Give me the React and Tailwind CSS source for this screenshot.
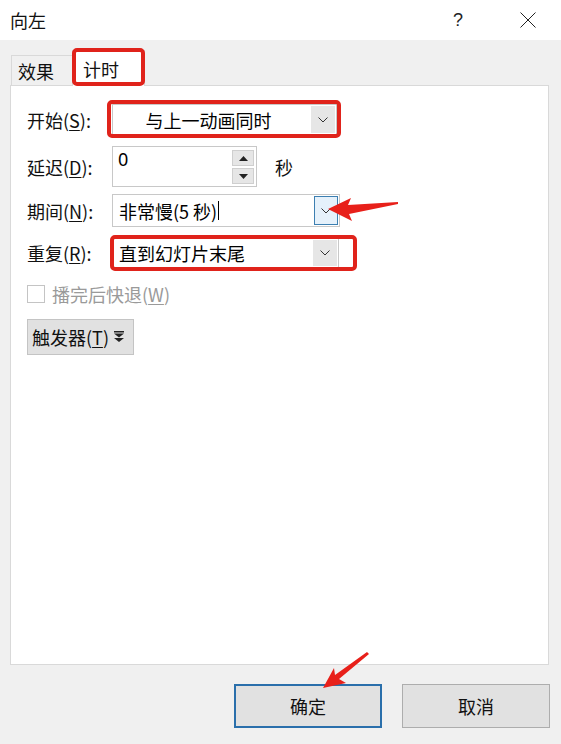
import React from 'react';

const font = "font-['Noto_Sans_CJK_SC','Noto_Sans',sans-serif]";

function Chevron({ className = '' }) {
  return (
    <svg width="10" height="6" viewBox="0 0 10 6" className={className}>
      <polyline points="0.5,0.5 5,5 9.5,0.5" fill="none" stroke="#333" strokeWidth="1" />
    </svg>
  );
}

function Combo({ text, width, height, center, active, cursor }) {
  return (
    <div
      className={`flex items-stretch bg-white border border-[#c8c8c8] ${width} ${height}`}
    >
      <div className={`flex-1 flex items-center text-[18px] leading-none ${center ? 'justify-center pr-[6px]' : 'pl-[6px]'}`}>
        {text}
        {cursor && <span className="ml-[1px] inline-block w-px h-[19px] bg-black" />}
      </div>
      <div
        className={`w-[24px] m-[1px] flex items-center justify-center ${
          active ? 'bg-[#e5f1fb] border border-[#3c7fb1]' : 'bg-[#e6e6e6]'
        }`}
      >
        <Chevron />
      </div>
    </div>
  );
}

function Label({ children, k }) {
  return (
    <div className="w-[85px] text-[18px] leading-none text-[#111]">
      {children}(<span className="underline underline-offset-2">{k}</span>):
    </div>
  );
}

export default function App() {
  return (
    <div className={`relative w-[561px] h-[744px] bg-[#f0f0f0] flex flex-col overflow-hidden ${font}`}>
      {/* title bar */}
      <div className="h-[40px] bg-white flex items-center pl-[10px]">
        <div className="text-[18px] leading-none text-[#111]">向左</div>
        <div className="ml-auto w-[40px] text-center text-[18px] leading-none text-[#222] font-['Liberation_Sans',sans-serif] mr-[30px]">?</div>
        <div className="w-[40px] h-[40px] flex items-center justify-center mr-[13px]">
          <svg width="16" height="16" viewBox="0 0 16 16">
            <path d="M0.5 0.5 L15.5 15.5 M15.5 0.5 L0.5 15.5" stroke="#222" strokeWidth="1" />
          </svg>
        </div>
      </div>

      {/* tabs */}
      <div className="h-[45px] flex items-end pl-[11px]">
        <div className="w-[61px] h-[30px] border-t border-l border-[#d9d9d9] bg-[#f0f0f0] flex items-center pl-[6px] text-[18px] leading-none text-[#111]">
          效果
        </div>
        <div className="relative z-10 -mb-px w-[73px] h-[36px] bg-white border-t border-l border-r border-[#d9d9d9] flex items-center pl-[10px] text-[18px] leading-none text-[#111]">
          计时
        </div>
      </div>

      {/* panel */}
      <div className="ml-[10px] w-[539px] h-[580px] bg-white border border-[#d9d9d9] flex flex-col pl-[16px] pt-[18px]">
        <div className="flex items-center">
          <Label k="S">开始</Label>
          <Combo text="与上一动画同时" width="w-[225px]" height="h-[31px]" center />
        </div>

        <div className="flex items-center mt-[11px]">
          <Label k="D">延迟</Label>
          <div className="w-[145px] h-[41px] bg-white border border-[#c8c8c8] flex">
            <div className="flex-1 pl-[5px] pt-[3px] text-[18px] leading-none font-['Noto_Sans',sans-serif]">0</div>
            <div className="flex flex-col gap-[2px] pt-[3px] pr-[2px]">
              <div className="w-[22px] h-[16px] bg-[#e6e6e6] border border-[#cfcfcf] flex items-center justify-center">
                <svg width="9" height="5" viewBox="0 0 9 5"><polygon points="0,5 4.5,0 9,5" fill="#222" /></svg>
              </div>
              <div className="w-[22px] h-[16px] bg-[#e6e6e6] border border-[#cfcfcf] flex items-center justify-center">
                <svg width="9" height="5" viewBox="0 0 9 5"><polygon points="0,0 4.5,5 9,0" fill="#222" /></svg>
              </div>
            </div>
          </div>
          <div className="ml-[18px] text-[18px] leading-none text-[#111]">秒</div>
        </div>

        <div className="flex items-center mt-[7px]">
          <Label k="N">期间</Label>
          <Combo text="非常慢(5 秒)" width="w-[228px]" height="h-[33px]" active cursor />
        </div>

        <div className="flex items-center mt-[11px]">
          <Label k="R">重复</Label>
          <Combo text="直到幻灯片末尾" width="w-[227px]" height="h-[30px]" />
        </div>

        <div className="flex items-center mt-[17px]">
          <div className="w-[18px] h-[18px] border border-[#c4c4c4] bg-white" />
          <div className="ml-[7px] text-[18px] leading-none text-[#9a9a9a]">
            播完后快退(<span className="underline underline-offset-2">W</span>)
          </div>
        </div>

        <div className="mt-[16px] w-[107px] h-[36px] bg-[#e1e1e1] border border-[#c4c4c4] flex items-center pl-[4px] text-[18px] leading-none text-[#111]">
          触发器(<span className="underline underline-offset-2">T</span>)
          <svg width="10" height="12" viewBox="0 0 10 12" className="ml-[5px]">
            <rect x="0" y="0" width="10" height="1.5" fill="#222" />
            <polygon points="0,2.5 10,2.5 5,6.5" fill="#222" />
            <polygon points="0,7 10,7 5,11" fill="#222" />
          </svg>
        </div>
      </div>

      {/* footer buttons */}
      <div className="flex justify-end gap-[20px] pr-[11px] mt-[19px]">
        <div className="w-[148px] h-[44px] bg-[#e1e1e1] border-2 border-[#2a6fab] flex items-center justify-center text-[18px] leading-none text-[#111]">
          确定
        </div>
        <div className="w-[148px] h-[44px] bg-[#e1e1e1] border border-[#adadad] flex items-center justify-center text-[18px] leading-none text-[#111]">
          取消
        </div>
      </div>

      {/* red annotations */}
      <div className="absolute left-[72px] top-[48px] w-[73px] h-[38px] border-[4px] border-[#e0231b] rounded-[5px] z-20" />
      <div className="absolute left-[107px] top-[100px] w-[234px] h-[38px] border-[4px] border-[#e0231b] rounded-[5px]" />
      <div className="absolute left-[110px] top-[235px] w-[247px] h-[36px] border-[4px] border-[#e0231b] rounded-[5px]" />
      <svg className="absolute left-0 top-0 pointer-events-none" width="561" height="744">
        <polygon points="328,209 351,198 348,205 398,202 398,204 349,214 352,221" fill="#e8201a" />
        <polygon points="323,688 334,668 335,675 367,652 369,654 339,679 346,683" fill="#e8201a" />
      </svg>
    </div>
  );
}
